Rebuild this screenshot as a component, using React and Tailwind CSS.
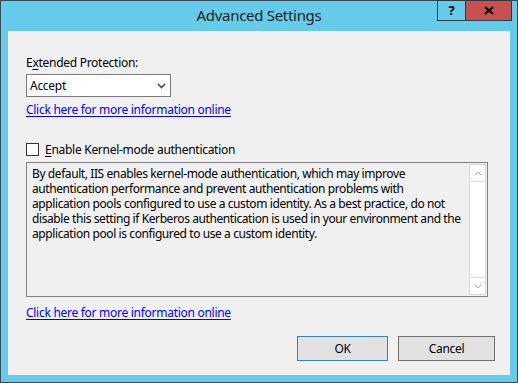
import React from 'react';

const font = { fontFamily: '"Noto Sans", "Open Sans", sans-serif' };

const lines = [
  'By default, IIS enables kernel-mode authentication, which may improve',
  'authentication performance and prevent authentication problems with',
  'application pools configured to use a custom identity. As a best practice, do not',
  'disable this setting if Kerberos authentication is used in your environment and the',
  'application pool is configured to use a custom identity.',
];

const TitleBar = () => (
  <div className="grid grid-cols-[1fr_auto_1fr] h-[30px] bg-[#66cbea]">
    <div />
    <div className="text-[15px] leading-[28px] tracking-[-0.3px] text-[#1e1e1e]">Advanced Settings</div>
    <div className="flex justify-end pr-[5px]">
      <div className="flex h-[21px] -mt-[1px] border border-[#2d3b42]">
        <div className="w-[28px] flex items-center justify-center text-[13px] font-bold text-black border-r border-[#2d3b42]">
          ?
        </div>
        <div className="w-[45px] flex items-center justify-center bg-[#c75050]">
          <svg width="10" height="9" viewBox="0 0 10 9">
            <path d="M1 1 L9 8 M9 1 L1 8" stroke="#000" strokeWidth="2.2" />
          </svg>
        </div>
      </div>
    </div>
  </div>
);

const Link = ({ className = '' }) => (
  <div className={`leading-[15px] ${className}`}>
    <span className="text-[#0000ff] underline underline-offset-[2px]">
      Click here for more information online
    </span>
  </div>
);

const ScrollArrow = ({ up }) => (
  <div className={`h-[17px] flex items-center justify-center bg-white ${up ? 'border-b' : 'border-t'} border-[#dadada]`}>
    <svg width="8" height="5" viewBox="0 0 8 5">
      <path d={up ? 'M0.5 4.5 L4 1 L7.5 4.5' : 'M0.5 0.5 L4 4 L7.5 0.5'} fill="none" stroke="#a8a8a8" strokeWidth="1" />
    </svg>
  </div>
);

export default function App() {
  return (
    <div className="w-[518px] h-[383px] flex flex-col border border-[#3a4a52] bg-[#66cbea] text-[12px] tracking-[-0.28px] text-black" style={font}>
      <TitleBar />
      <div className="mx-[7px] h-[344px] bg-[#f0f0f0] pl-[18px] pr-[15px] flex flex-col">
        <div className="mt-[24px] leading-[15px]">
          E<span className="underline underline-offset-[2px]">x</span>tended Protection:
        </div>
        <div className="mt-[4px] w-[145px] h-[23px] bg-white border border-[#7a7a7a] flex items-center justify-between pl-[3px] pr-[4px]">
          <span>Accept</span>
          <svg width="9" height="6" viewBox="0 0 9 6">
            <path d="M0.8 0.8 L4.5 4.6 L8.2 0.8" fill="none" stroke="#505050" strokeWidth="1.6" />
          </svg>
        </div>
        <Link className="mt-[5px]" />
        <div className="mt-[25px] h-[15px] flex items-center gap-[6px]">
          <div className="w-[13px] h-[13px] bg-white border border-[#333333]" />
          <span className="leading-[15px]">
            <span className="underline underline-offset-[2px]">E</span>nable Kernel-mode authentication
          </span>
        </div>
        <div className="mt-[5px] w-[462px] h-[135px] border border-[#828282] flex">
          <div className="flex-1 min-w-0 pl-[5px] pt-[3px] leading-[15px] tracking-[-0.41px] whitespace-nowrap">
            {lines.map((l, i) => (
              <div key={i}>{l}</div>
            ))}
          </div>
          <div className="w-[17px] mr-[1px] my-[1px] flex flex-col border border-[#dadada] bg-white">
            <ScrollArrow up />
            <div className="flex-1" />
            <ScrollArrow />
          </div>
        </div>
        <Link className="mt-[8px]" />
        <div className="mt-[16px] flex justify-end gap-[10px]">
          <button className="w-[91px] h-[25px] bg-[#e1e1e1] border border-[#3c7fb1]">OK</button>
          <button className="w-[97px] h-[25px] bg-[#e1e1e1] border border-[#707070]">Cancel</button>
        </div>
      </div>
    </div>
  );
}
